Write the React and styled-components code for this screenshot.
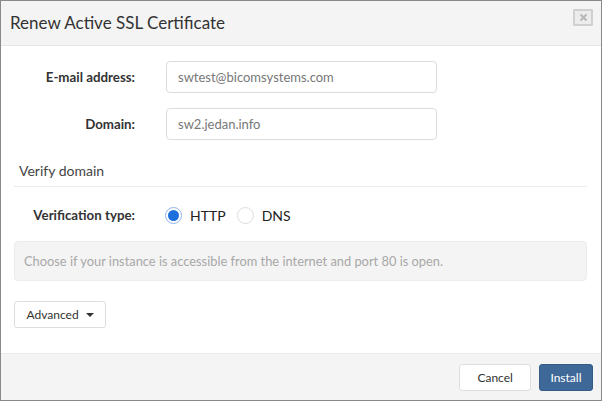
import React from "react";
import styled, { createGlobalStyle } from "styled-components";

const Global = createGlobalStyle`
  html, body { margin: 0; padding: 0; background: #fff; }
  body { font-family: Lato, "Open Sans", sans-serif; color: #333; }
  * { box-sizing: border-box; }
`;

const Window = styled.div`
  width: 602px;
  height: 401px;
  border: 1px solid #8a8a8a;
  display: flex;
  flex-direction: column;
  background: #fff;
  overflow: hidden;
`;

const Header = styled.div`
  height: 45px;
  flex: none;
  background: #f4f4f4;
  border-bottom: 1px solid #e6e6e6;
  display: flex;
  align-items: center;
  justify-content: space-between;
  padding: 0 8px 0 9px;
`;

const Title = styled.h1`
  margin: 0;
  font-size: 17px;
  font-weight: 400;
  color: #333;
  padding-bottom: 1px;
`;

const CloseBox = styled.button`
  width: 20px;
  height: 17px;
  margin-top: -12px;
  border: 2px solid #d0d0d0;
  background: #ececec;
  border-radius: 1px;
  padding: 0;
  display: flex;
  align-items: center;
  justify-content: center;
`;

const Body = styled.div`
  flex: 1;
  padding: 15px 13px 0 13px;
  display: flex;
  flex-direction: column;
`;

const Row = styled.div`
  display: flex;
  align-items: center;
  height: 32px;
  margin-top: ${(p) => p.$mt || 0}px;
`;

const Label = styled.label`
  width: 121px;
  text-align: right;
  font-weight: 700;
  font-size: 13.3px;
  color: #333;
  margin-right: 30px;
`;

const Input = styled.div`
  width: 271px;
  height: 32px;
  margin-left: 1px;
  border: 1px solid #dcdcdc;
  border-radius: 4px;
  padding: 0 11px;
  display: flex;
  align-items: center;
  font-size: 13px;
  color: #777;
`;

const Section = styled.div`
  margin-top: 15px;
  height: 32px;
  border-bottom: 1px solid #ececec;
  padding-left: 5px;
  display: flex;
  align-items: center;
  font-size: 14px;
  color: #444;
  margin-right: 1px;
  padding-bottom: 1px;
`;

const RadioGroup = styled.div`
  display: flex;
  align-items: center;
`;

const RadioDot = styled.span`
  width: 17px;
  height: 17px;
  border-radius: 50%;
  border: 1px solid ${(p) => (p.$on ? "#8fb4ee" : "#dcdcdc")};
  background: #fff;
  display: flex;
  align-items: center;
  justify-content: center;
  margin-right: 8px;
  &::after {
    content: "";
    width: 11px;
    height: 11px;
    border-radius: 50%;
    background: ${(p) => (p.$on ? "#1c6fdc" : "transparent")};
  }
`;

const RadioText = styled.span`
  font-size: 14px;
  color: #222;
  margin-right: ${(p) => p.$mr || 0}px;
`;

const Info = styled.div`
  margin-top: 10px;
  height: 40px;
  background: #f4f4f4;
  border: 1px solid #ececec;
  border-radius: 4px;
  padding: 0 9px;
  display: flex;
  align-items: center;
  font-size: 12.85px;
  color: #a8a8a8;
  margin-right: 1px;
`;

const AdvancedRow = styled.div`
  margin-top: 20px;
  display: flex;
`;

const Button = styled.button`
  height: 27px;
  padding: 0 ${(p) => p.$px || 12}px;
  font-family: Lato, "Open Sans", sans-serif;
  font-size: 12px;
  border-radius: 3px;
  border: 1px solid ${(p) => (p.$primary ? "#345a86" : "#dedede")};
  background: ${(p) => (p.$primary ? "#3e6898" : "#fff")};
  color: ${(p) => (p.$primary ? "#fff" : "#333")};
  display: flex;
  align-items: center;
  gap: 7px;
`;

const Caret = styled.span`
  width: 0;
  height: 0;
  border-left: 4px solid transparent;
  border-right: 4px solid transparent;
  border-top: 4px solid #333;
`;

const Footer = styled.div`
  height: 47px;
  flex: none;
  background: #f4f4f4;
  border-top: 1px solid #ebebeb;
  display: flex;
  align-items: center;
  justify-content: flex-end;
  gap: 8px;
  padding: 1px 8px 0 0;
`;

export default function App() {
  return (
    <>
      <Global />
      <Window>
        <Header>
          <Title>Renew Active SSL Certificate</Title>
          <CloseBox aria-label="close">
            <svg width="9" height="9" viewBox="0 0 9 9">
              <path d="M1.5 1.5 L7.5 7.5 M7.5 1.5 L1.5 7.5" stroke="#b9b9b9" strokeWidth="2.2" />
            </svg>
          </CloseBox>
        </Header>
        <Body>
          <Row>
            <Label>E-mail address:</Label>
            <Input>swtest@bicomsystems.com</Input>
          </Row>
          <Row $mt={15}>
            <Label>Domain:</Label>
            <Input>sw2.jedan.info</Input>
          </Row>
          <Section>Verify domain</Section>
          <Row $mt={12}>
            <Label>Verification type:</Label>
            <RadioGroup>
              <RadioDot $on />
              <RadioText $mr={11}>HTTP</RadioText>
              <RadioDot />
              <RadioText>DNS</RadioText>
            </RadioGroup>
          </Row>
          <Info>Choose if your instance is accessible from the internet and port 80 is open.</Info>
          <AdvancedRow>
            <Button $px={11.5}>
              Advanced <Caret />
            </Button>
          </AdvancedRow>
        </Body>
        <Footer>
          <Button $px={17}>Cancel</Button>
          <Button $primary $px={10.5}>Install</Button>
        </Footer>
      </Window>
    </>
  );
}
